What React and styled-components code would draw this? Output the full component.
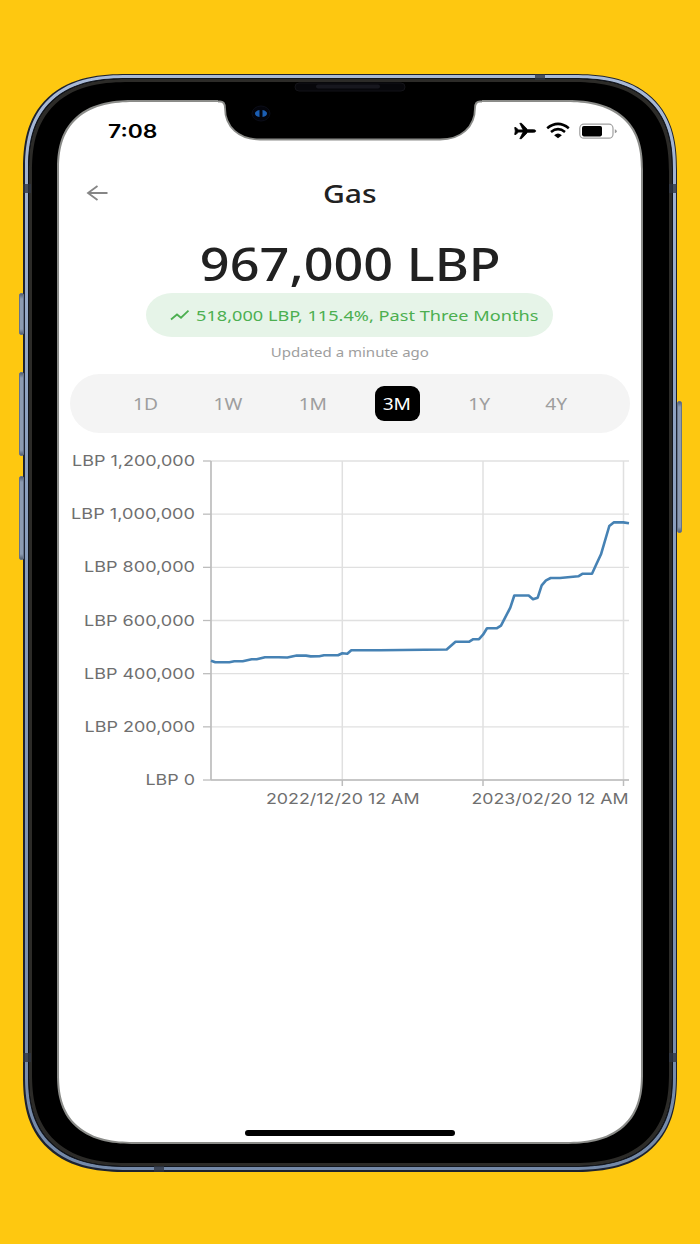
// App.jsx
import React from 'react';
import styled, { createGlobalStyle } from 'styled-components';

const GlobalStyle = createGlobalStyle`
  * {
    box-sizing: border-box;
  }

  body {
    margin: 0;
    background: #fec810;
    font-family: 'Noto Sans', 'Open Sans', sans-serif;
  }
`;

const Stage = styled.main`
  width: 700px;
  height: 1244px;
  padding: 73.5px 23px 0;
  overflow: hidden;
  background: #fec810;
`;

/* Phone body: dark edge, metal rail, dark seam, bezel */
const Phone = styled.div`
  position: relative;
  width: 654px;
  height: 1098px;
  padding: 1.5px;
  background: #1c2230;
  border-radius: 104px / 96px;
  corner-shape: superellipse(1.32);
`;

const Rail = styled.div`
  height: 100%;
  padding: 3px;
  background: linear-gradient(#a9bad6, #8fa3c2 30%, #7489a8);
  border-radius: 102.5px / 94.5px;
  corner-shape: superellipse(1.32);
`;

const Bezel = styled.div`
  height: 100%;
  padding: 21px 29px 22px 28.5px;
  background: #000;
  border: 1px solid #11151d;
  box-shadow: inset 0 0 0 3px #2c2b28;
  border-radius: 99.5px / 91.5px;
  corner-shape: superellipse(1.32);
`;

const Screen = styled.div`
  display: flex;
  flex-direction: column;
  height: 100%;
  padding: 0 11px;
  background: #fff;
  border: 2px solid #8b8c89;
  border-radius: 78px / 70px;
  corner-shape: superellipse(1.32);
`;

const SideButton = styled.div`
  position: absolute;
  top: ${(props) => props.$top}px;
  ${(props) => props.$side}: -4.5px;
  width: 5px;
  height: ${(props) => props.$height}px;
  background: linear-gradient(
    #566273,
    #8c9bb2 5px,
    #8c9bb2 calc(100% - 5px),
    #566273
  );
  border: 1px solid #667389;
  border-radius: 2px;
`;

const Band = styled.div`
  position: absolute;
  top: ${(props) => props.$top}px;
  left: ${(props) => props.$left}px;
  width: ${(props) => (props.$flat ? 10 : 8)}px;
  height: ${(props) => (props.$flat ? 6 : 9)}px;
  background: rgba(48, 54, 66, 0.8);
`;

const Notch = styled.svg`
  position: absolute;
  top: 5px;
  left: 195px;
  width: 264px;
  height: 64px;
`;

/* The whole interface is drawn a little wider than the type's own width */
const Wide = styled.span`
  display: inline-block;
  white-space: nowrap;
  transform: scaleX(${(props) => props.$by || 1.2});
  transform-origin: ${(props) => props.$from || 'center'};
`;

const StatusBar = styled.div`
  display: flex;
  align-items: center;
  justify-content: space-between;
  height: 54.5px;
  padding: 3.5px 10px 0 38px;
`;

const Time = styled.div`
  color: #000;
  font-family: Inter, sans-serif;
  font-size: 18px;
  font-weight: 600;
`;

const StatusIcons = styled.svg`
  width: 106px;
  height: 20px;
`;

const Header = styled.header`
  display: grid;
  grid-template-columns: 56px 1fr 56px;
  align-items: center;
  height: 72px;
`;

const BackButton = styled.button`
  display: flex;
  padding: 0 0 0 15px;
  background: none;
  border: 0;
`;

const Title = styled.h1`
  margin: 0;
  color: #212121;
  font-size: 25.5px;
  font-weight: 500;
  text-align: center;
`;

const Price = styled.div`
  height: 64px;
  color: #212121;
  font-size: 44.5px;
  font-weight: 500;
  line-height: 70px;
  text-align: center;
`;

const Change = styled.div`
  display: flex;
  align-items: center;
  align-self: center;
  gap: 6px;
  width: 407px;
  height: 44px;
  padding: 1px 0 0 24px;
  background: #e6f4e8;
  border-radius: 26px / 22px;
  color: #4caf50;
  font-size: 15.3px;
`;

const Updated = styled.div`
  height: 37px;
  color: #9e9e9e;
  font-size: 12.5px;
  line-height: 32px;
  text-align: center;
`;

const Ranges = styled.div`
  display: flex;
  flex: none;
  align-items: center;
  justify-content: center;
  gap: 40px;
  height: 59px;
  background: #f4f4f4;
  border-radius: 30px;
`;

const Range = styled.button`
  width: ${(props) => props.$width}px;
  height: 35px;
  padding: 1px 0 0;
  background: ${(props) => (props.$active ? '#000' : 'transparent')};
  border: 0;
  border-radius: 9px;
  color: ${(props) => (props.$active ? '#fff' : '#9e9e9e')};
  font-family: inherit;
  font-size: 16px;
`;

const ChartBox = styled.svg`
  flex: none;
  display: block;
  width: 560px;
  height: 370px;
  margin-top: 13px;

  text {
    fill: #6f6f6f;
    font-family: Inter, sans-serif;
    font-size: 15px;
  }
`;

const HomeBar = styled.div`
  align-self: center;
  width: 210px;
  height: 6px;
  margin-top: auto;
  margin-bottom: 6px;
  background: #000;
  border-radius: 3px;
`;

const ranges = [
  { label: '1D', width: 40 },
  { label: '1W', width: 45 },
  { label: '1M', width: 44 },
  { label: '3M', width: 45 },
  { label: '1Y', width: 38 },
  { label: '4Y', width: 36 },
];

const yLabels = [
  { text: 'LBP 1,200,000', width: 123 },
  { text: 'LBP 1,000,000', width: 124 },
  { text: 'LBP 800,000', width: 111 },
  { text: 'LBP 600,000', width: 111 },
  { text: 'LBP 400,000', width: 111 },
  { text: 'LBP 200,000', width: 110.5 },
  { text: 'LBP 0', width: 49.5 },
];

const xTicks = [131.3, 272, 412.5];

// [x, y] from the top left corner of the plot
const points = [
  [0, 199.7], [4.3, 201.2], [18.3, 201.2], [23.3, 200.3], [31.7, 200.3],
  [40.7, 198.3], [45.7, 198.3], [54, 196.2], [67.3, 196.2], [76.3, 196.5],
  [85.7, 194.6], [95, 194.6], [99.7, 195.4], [108.3, 195.2], [113, 194.2],
  [127, 194.2], [131.3, 192.2], [136.3, 192.7], [140.3, 189.2], [169, 189.2],
  [235.7, 188.5], [244.5, 180.7], [258.3, 180.7], [262.3, 178.2], [268, 178.2],
  [272, 173.7], [276, 167.2], [286, 167.2], [290, 164.7], [299.3, 146.7],
  [303.3, 134.5], [317.7, 134.5], [322, 138.3], [326.7, 136.7], [330.7, 124.3],
  [335, 119.3], [339.7, 117], [349, 117], [367.3, 115.3], [371.3, 112.8],
  [381, 112.8], [385, 104], [390, 93.3], [398.3, 65], [402.7, 61.4],
  [412.3, 61.4], [418, 62.3],
];

const STEP = 53.17;

const Chart = () => (
  <ChartBox viewBox="0 0 560 370">
    <g transform="translate(141 15)">
      {yLabels.map((label, i) => (
        <g key={label.text} transform={`translate(0 ${i * STEP})`}>
          <path d="M0 0H418" stroke="#e0e0e0" strokeWidth="1.3" />
          <path d="M-8 0H0" stroke="#bdbdbd" strokeWidth="1.3" />
          <text
            x={-16 - label.width}
            y="5"
            textLength={label.width}
            lengthAdjust="spacingAndGlyphs"
          >
            {label.text}
          </text>
        </g>
      ))}
      {xTicks.map((x) => (
        <g key={x}>
          <path d={`M${x} 0V319`} stroke="#e0e0e0" strokeWidth="1.5" />
          <path d={`M${x} 319V325`} stroke="#bdbdbd" strokeWidth="1.5" />
        </g>
      ))}
      <path d="M0 0V319" stroke="#bdbdbd" strokeWidth="1.7" />
      <path d="M0 319H418" stroke="#bdbdbd" strokeWidth="1.3" />
      <polyline
        points={points.map((p) => p.join(',')).join(' ')}
        fill="none"
        stroke="#4682b4"
        strokeWidth="2.6"
        strokeLinejoin="round"
      />
      <text x="55" y="343" textLength="153.5" lengthAdjust="spacingAndGlyphs">
        2022/12/20 12 AM
      </text>
      <text x="260.5" y="343" textLength="157" lengthAdjust="spacingAndGlyphs">
        2023/02/20 12 AM
      </text>
    </g>
  </ChartBox>
);

const App = () => {
  return (
    <>
      <GlobalStyle />
      <Stage>
        <Phone>
          <SideButton $side="left" $top={219.5} $height={42} />
          <SideButton $side="left" $top={298.5} $height={84} />
          <SideButton $side="left" $top={402.5} $height={84} />
          <SideButton $side="right" $top={327} $height={132} />
          <Rail>
            <Bezel>
              <Screen>
                <StatusBar>
                  <Time>
                    <Wide $from="left" $by={1.27}>7:08</Wide>
                  </Time>
                  <StatusIcons viewBox="0 0 106 20">
                    {/* airplane */}
                    <path
                      d="M0.7 6.500h1.3l2.400 2.400h4.700L5.800 2.300h1.700l6.200 6.400h5.600c1.600 0 2.500.7 2.500 1.300s-.9 1.300-2.500 1.300h-5.600l-6.200 6.400H5.800l3.300-6.600H4.400l-2.400 2.400H.7l.6-3.500z"
                      stroke="#000"
                      strokeWidth="0.8"
                      strokeLinejoin="round"
                    />
                    {/* wifi */}
                    <g fill="none" stroke="#000" strokeWidth="2.6">
                      <path d="M33.2 7.200Q44 -1.400 54.8 7.200" />
                      <path d="M37 11Q44 5.400 51 11" />
                    </g>
                    <path d="M40.100 14.200Q44 11 47.900 14.200L44 17.300z" />
                    {/* battery */}
                    <rect
                      x="65.8"
                      y="3.2"
                      width="33.2"
                      height="14"
                      rx="4"
                      fill="none"
                      stroke="#a0a0a0"
                      strokeWidth="1.2"
                    />
                    <rect x="68" y="5" width="20" height="10.4" rx="1.8" />
                    <path d="M100.8 8.200q1.900.7 1.900 2t-1.900 2z" fill="#999" />
                  </StatusIcons>
                </StatusBar>
                <Header>
                  <BackButton aria-label="Back">
                    <svg width="24" height="20" viewBox="0 0 24 20" fill="none">
                      <path
                        d="M22.500 10H3M12.500 3L3 10l9.500 7"
                        stroke="#868686"
                        strokeWidth="1.8"
                      />
                    </svg>
                  </BackButton>
                  <Title>
                    <Wide $by={1.18}>Gas</Wide>
                  </Title>
                </Header>
                <Price>
                  <Wide $by={1.173}>967,000 LBP</Wide>
                </Price>
                <Change>
                  <svg width="20" height="14" viewBox="0 0 20 14" fill="none">
                    <path
                      d="M1 11.500L7 6.500l4 3.200L18.500 2.700"
                      stroke="#4caf50"
                      strokeWidth="1.8"
                    />
                  </svg>
                  <Wide $from="left" $by={1.187}>
                    518,000 LBP, 115.4%, Past Three Months
                  </Wide>
                </Change>
                <Updated>
                  <Wide>Updated a minute ago</Wide>
                </Updated>
                <Ranges>
                  {ranges.map((range) => (
                    <Range
                      key={range.label}
                      $width={range.width}
                      $active={range.label === '3M'}
                    >
                      <Wide>{range.label}</Wide>
                    </Range>
                  ))}
                </Ranges>
                <Chart />
                <HomeBar />
              </Screen>
            </Bezel>
          </Rail>
          <Band $top={110} $left={0} />
          <Band $top={979} $left={0} />
          <Band $top={110} $left={646} />
          <Band $top={979} $left={646} />
          <Band $flat $top={0.5} $left={512} />
          <Band $flat $top={1092} $left={131} />
          <Notch viewBox="0 0 264 64">
            <path d="M0 4V22.500H2Q7 22.500 7 29C7 48 21 60.500 42 60.500H222C243 60.500 257 48 257 29Q257 22.500 262 22.500H264V4z" />
            <path
              d="M0 22.500H2Q7 22.500 7 29C7 48 21 60.500 42 60.500H222C243 60.500 257 48 257 29Q257 22.500 262 22.500H264"
              fill="none"
              stroke="#8b8c89"
              strokeWidth="1.8"
            />
            <rect
              x="77"
              y="4"
              width="110"
              height="8"
              rx="4"
              fill="#07070b"
              stroke="#131318"
            />
            <rect x="98" y="5.500" width="64" height="4" rx="2" fill="#17171e" />
            <ellipse cx="43" cy="34.500" rx="9" ry="7.500" fill="#03040b" stroke="#0b0d18" />
            <path
              d="M41.500 31Q37 32 37 34.500T41.500 38zM44.500 31Q49 32 49 34.500T44.500 38z"
              fill="#1b5eb4"
            />
          </Notch>
        </Phone>
      </Stage>
    </>
  );
};

export default App;
